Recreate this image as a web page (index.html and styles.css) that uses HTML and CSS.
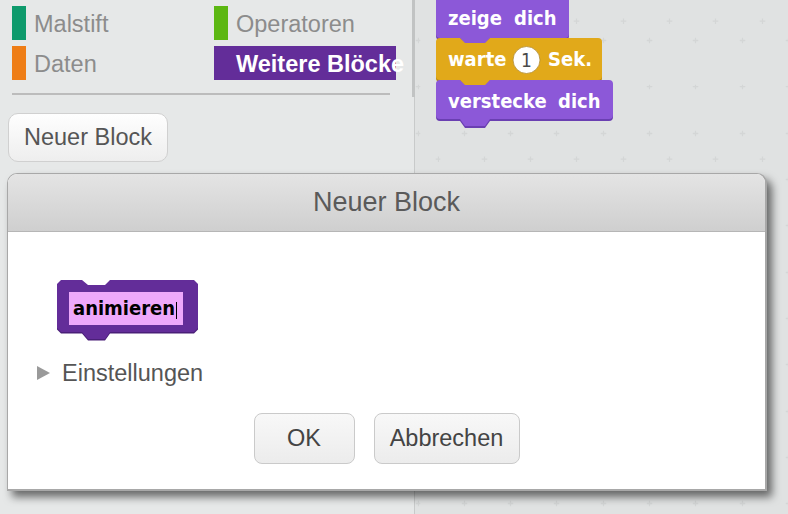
FILE: index.html
```html
<!DOCTYPE html>
<html lang="de">
<head>
<meta charset="utf-8">
<title>Neuer Block</title>
<link rel="stylesheet" href="styles.css">
</head>
<body>
<div class="app">
  <aside class="palette">
    <div class="categories">
      <div class="cat"><span class="swatch pen"></span><span class="label">Malstift</span></div>
      <div class="cat"><span class="swatch operators"></span><span class="label">Operatoren</span></div>
      <div class="cat"><span class="swatch data"></span><span class="label">Daten</span></div>
      <div class="cat selected"><span class="swatch more"></span><span class="label">Weitere Blöcke</span></div>
    </div>
    <div class="divider"></div>
    <button class="new-block">Neuer Block</button>
    <div class="scroll-thumb"></div>
  </aside>
  <main class="scripts">
    <svg class="stack" width="190" height="140" viewBox="432 -10 190 140" xmlns="http://www.w3.org/2000/svg">
      <path class="looks-shadow" transform="translate(0,2)" d="M436,-4 Q436,-8 440,-8 L460,-8 L465,-3 L485,-3 L490,-8 L565,-8 Q569,-8 569,-4 L569,34 Q569,38 565,38 L490,38 L485,44 L465,44 L460,38 L440,38 Q436,38 436,34 Z"/>
      <path class="looks" d="M436,-4 Q436,-8 440,-8 L460,-8 L465,-3 L485,-3 L490,-8 L565,-8 Q569,-8 569,-4 L569,34 Q569,38 565,38 L490,38 L485,44 L465,44 L460,38 L440,38 Q436,38 436,34 Z"/>
      <text class="block-text" y="25"><tspan x="448">zeige</tspan><tspan x="514">dich</tspan></text>

      <path class="control-shadow" transform="translate(0,2)" d="M436,42 Q436,38 440,38 L460,38 L465,43 L485,43 L490,38 L598,38 Q602,38 602,42 L602,76 Q602,80 598,80 L490,80 L485,86 L465,86 L460,80 L440,80 Q436,80 436,76 Z"/>
      <path class="control" d="M436,42 Q436,38 440,38 L460,38 L465,43 L485,43 L490,38 L598,38 Q602,38 602,42 L602,76 Q602,80 598,80 L490,80 L485,86 L465,86 L460,80 L440,80 Q436,80 436,76 Z"/>
      <text class="block-text" x="448" y="66">warte</text>
      <circle class="num-input" cx="526.5" cy="60" r="13.5"/>
      <text class="num-text" x="526.5" y="66.5" text-anchor="middle">1</text>
      <text class="block-text" x="548" y="66">Sek.</text>

      <path class="looks-shadow" transform="translate(0,2)" d="M436,84 Q436,80 440,80 L460,80 L465,85 L485,85 L490,80 L609,80 Q613,80 613,84 L613,115 Q613,119 609,119 L490,119 L485,126 L465,126 L460,119 L440,119 Q436,119 436,115 Z"/>
      <path class="looks" d="M436,84 Q436,80 440,80 L460,80 L465,85 L485,85 L490,80 L609,80 Q613,80 613,84 L613,115 Q613,119 609,119 L490,119 L485,126 L465,126 L460,119 L440,119 Q436,119 436,115 Z"/>
      <text class="block-text" y="108"><tspan x="448">verstecke</tspan><tspan x="558">dich</tspan></text>
    </svg>
  </main>
</div>

<section class="dialog">
  <header class="dialog-header">Neuer Block</header>
  <div class="dialog-body">
    <svg class="proto" width="142" height="62" viewBox="0 0 142 62" xmlns="http://www.w3.org/2000/svg">
      <path class="proto-shadow" transform="translate(0,1.5)" d="M0,4 L4,0 L25,0 L31,5 L48,5 L53,0 L137,0 L141,4 L141,48 L137,52 L53,52 L48,59 L31,59 L25,52 L4,52 L0,48 Z"/>
      <path class="proto-fill" d="M0,4 L4,0 L25,0 L31,5 L48,5 L53,0 L137,0 L141,4 L141,48 L137,52 L53,52 L48,59 L31,59 L25,52 L4,52 L0,48 Z"/>
      <rect class="proto-field" x="12" y="12" width="114" height="33"/>
      <text class="proto-text" x="16" y="35">animieren</text>
      <line class="caret" x1="119.5" y1="22" x2="119.5" y2="39"/>
    </svg>
    <div class="settings"><span class="triangle"></span><span>Einstellungen</span></div>
    <div class="actions">
      <button class="btn ok">OK</button>
      <button class="btn cancel">Abbrechen</button>
    </div>
  </div>
</section>
</body>
</html>
```
FILE: styles.css
```css
* { box-sizing: border-box; }

html, body {
  margin: 0;
  padding: 0;
}

body {
  width: 788px;
  height: 514px;
  overflow: hidden;
  position: relative;
  font-family: "Liberation Sans", Arial, sans-serif;
}

.app {
  display: flex;
  height: 514px;
}

/* ---------- palette ---------- */
.palette {
  width: 415px;
  flex: none;
  background: #e6e8e8;
  border-right: 1px solid #c8caca;
  position: relative;
}

.scroll-thumb {
  position: absolute;
  right: -1px;
  top: 0;
  width: 3px;
  height: 97px;
  background: #c1c3c3;
}

.categories {
  display: grid;
  grid-template-columns: 202px 182px;
  row-gap: 6px;
  padding: 6px 0 0 12px;
}

.cat {
  display: flex;
  align-items: center;
  gap: 8px;
  width: 182px;
  height: 34px;
  font-size: 23.5px;
  color: #8c8c8c;
  white-space: nowrap;
}

.cat .label {
  padding-top: 2px;
}

.swatch {
  width: 14px;
  height: 34px;
  flex: none;
}

.swatch.pen { background: #0e9a6c; }
.swatch.operators { background: #5cb712; }
.swatch.data { background: #ee7d16; }
.swatch.more { background: #632d99; }

.cat.selected {
  background: #632d99;
  color: #ffffff;
  font-weight: bold;
}

.divider {
  margin: 13px 0 0 12px;
  width: 378px;
  height: 2px;
  background: #bcbcbc;
}

.new-block {
  display: block;
  margin: 18px 0 0 8px;
  width: 160px;
  height: 49px;
  padding: 0;
  border: 1px solid #d0d0d0;
  border-radius: 10px;
  background: linear-gradient(#fefefe, #eeeeee);
  font-family: "Liberation Sans", Arial, sans-serif;
  font-size: 23.5px;
  color: #555555;
}

/* ---------- scripts area ---------- */
.scripts {
  flex: 1;
  position: relative;
  background-color: #e0e2e2;
  background-image:
    url("data:image/svg+xml;utf8,<svg xmlns='http://www.w3.org/2000/svg' width='46.3' height='46.3'><path d='M23.15 20.4v5.5M20.4 23.15h5.5' stroke='%23d4d6d6' stroke-width='1.3'/></svg>"),
    url("data:image/svg+xml;utf8,<svg xmlns='http://www.w3.org/2000/svg' width='46.3' height='138.9'><path d='M23.15 20.4v5.5M20.4 23.15h5.5' stroke='%23d4d6d6' stroke-width='1.3'/></svg>");
  background-size: 46.3px 46.3px, 46.3px 138.9px;
  background-position: -20.15px 17.55px, -0.15px -2.45px;
}

.stack {
  position: absolute;
  left: 17px;
  top: -10px;
}

.looks { fill: #8c58d8; }
.looks-shadow { fill: #6a3fb2; }
.control { fill: #e1a91a; }
.control-shadow { fill: #b8870f; }

.block-text {
  font-family: "DejaVu Sans Condensed", "DejaVu Sans", Verdana, sans-serif;
  font-stretch: condensed;
  font-weight: bold;
  font-size: 20px;
  fill: #ffffff;
}

.num-input {
  fill: #ffffff;
  stroke: #b08a30;
  stroke-width: 0.8;
}

.num-text {
  font-family: "DejaVu Sans Condensed", "DejaVu Sans", Verdana, sans-serif;
  font-stretch: condensed;
  font-size: 19px;
  fill: #4a4a4a;
}

/* ---------- dialog ---------- */
.dialog {
  position: absolute;
  left: 7px;
  top: 173px;
  width: 760px;
  height: 318px;
  border: 1px solid #a8a8a8;
  border-bottom-width: 2px;
  border-right-width: 2px;
  border-radius: 10px 10px 0 0;
  background: #ffffff;
  box-shadow: 5px 6px 9px rgba(0, 0, 0, 0.55);
  display: flex;
  flex-direction: column;
  overflow: hidden;
}

.dialog-header {
  height: 58px;
  flex: none;
  background: linear-gradient(#e4e4e4, #cfcfcf);
  border-bottom: 1px solid #b6b6b6;
  display: flex;
  align-items: center;
  justify-content: center;
  font-size: 27px;
  color: #5a5a5a;
}

.dialog-body {
  flex: 1;
  display: flex;
  flex-direction: column;
  padding-top: 48px;
}

.proto {
  display: block;
  margin-left: 49px;
}

.proto-shadow { fill: #4a1f78; }
.proto-fill { fill: #632d99; }
.proto-field { fill: #eea8fb; }

.proto-text {
  font-family: "DejaVu Sans Condensed", "DejaVu Sans", Verdana, sans-serif;
  font-stretch: condensed;
  font-weight: bold;
  font-size: 20px;
  fill: #000000;
}

.caret {
  stroke: #000000;
  stroke-width: 1;
}

.settings {
  display: flex;
  align-items: center;
  gap: 12px;
  margin: 17px 0 0 29px;
  height: 28px;
  font-size: 23.5px;
  color: #555555;
}

.triangle {
  width: 0;
  height: 0;
  border-left: 13px solid #9a9a9a;
  border-top: 7px solid transparent;
  border-bottom: 7px solid transparent;
}

.actions {
  display: flex;
  justify-content: center;
  gap: 19px;
  margin-top: 26px;
}

.btn {
  height: 51px;
  padding: 0;
  border: 1px solid #cacaca;
  border-radius: 8px;
  background: linear-gradient(#f8f8f8, #ececec);
  font-family: "Liberation Sans", Arial, sans-serif;
  font-size: 23.5px;
  color: #444444;
}

.btn.ok { width: 101px; }
.btn.cancel { width: 146px; }
```
